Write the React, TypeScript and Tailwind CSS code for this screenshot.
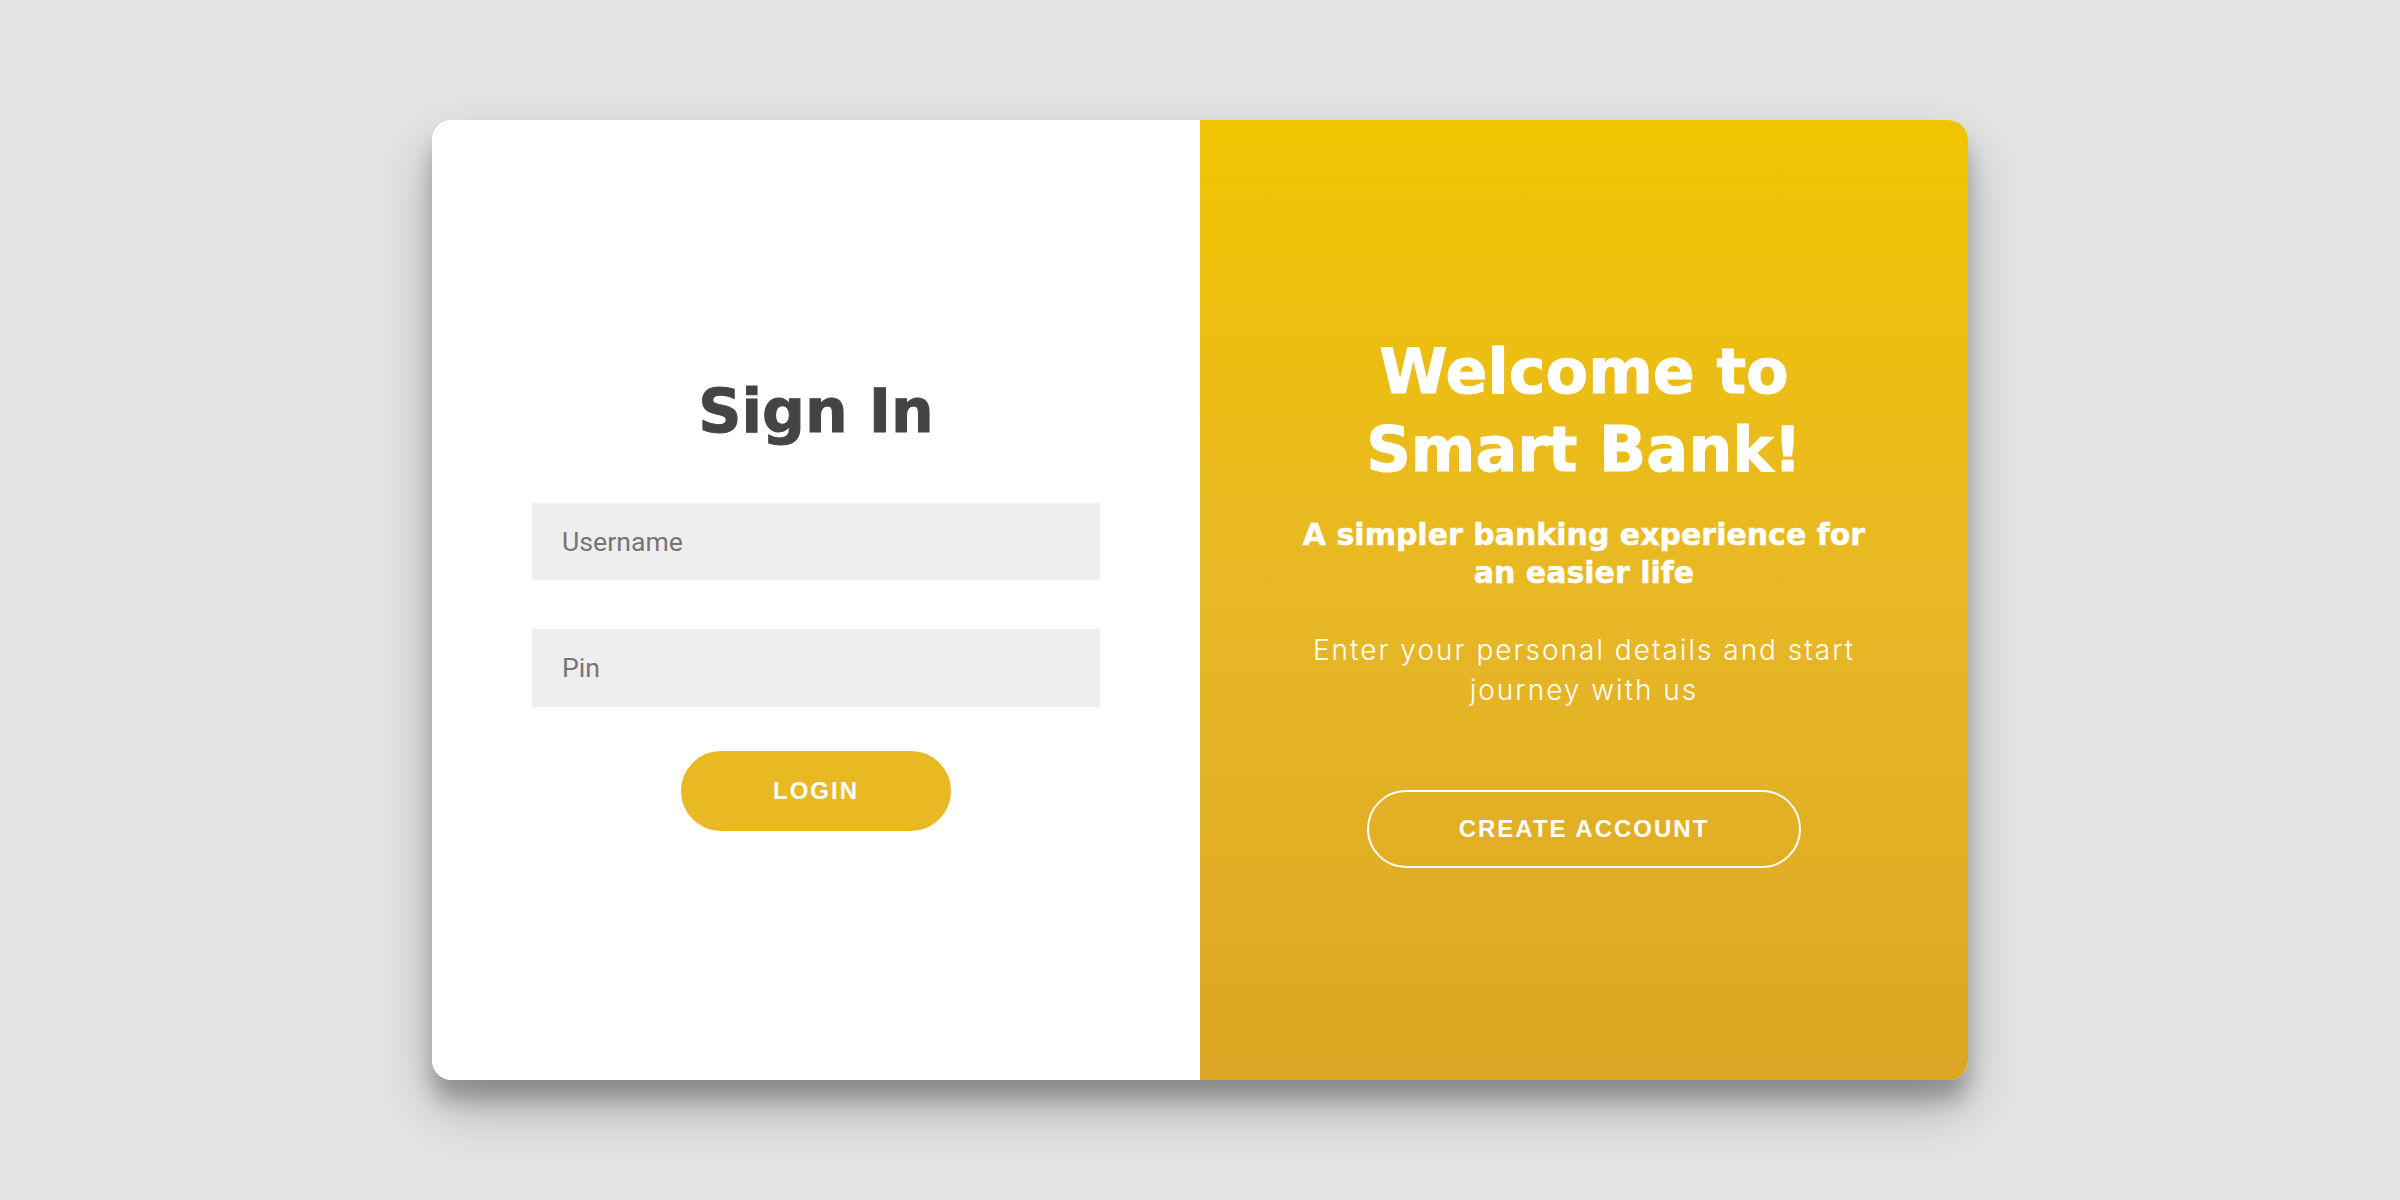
import React from "react";

export default function App() {
  return (
    <div className="w-[2400px] h-[1200px] bg-[#e4e4e4] flex items-center justify-center">
      <div className="w-[1536px] h-[960px] rounded-[20px] overflow-hidden flex bg-white shadow-[0_28px_56px_rgba(0,0,0,0.25),0_20px_20px_rgba(0,0,0,0.22)]">
        {/* Left: sign in */}
        <div className="w-[768px] h-full bg-white flex flex-col items-center justify-center px-[100px] pt-[6px]">
          <h1 className="text-[60px] leading-[72px] font-bold text-[#444444] m-0 [-webkit-text-stroke:1px_#444444] [font-family:'DejaVu_Sans',sans-serif]">
            Sign In
          </h1>
          <input
            type="text"
            placeholder="Username"
            className="mt-[56px] w-full h-[77px] bg-[#eeeeee] px-[30px] text-[26.67px] text-[#444] placeholder:text-[#757575] outline-none border-0 [font-family:Roboto,sans-serif]"
          />
          <input
            type="password"
            placeholder="Pin"
            className="mt-[49px] w-full h-[78px] bg-[#eeeeee] px-[30px] text-[26.67px] text-[#444] placeholder:text-[#757575] outline-none border-0 [font-family:Roboto,sans-serif]"
          />
          <button className="mt-[44px] h-[80px] px-[90px] rounded-[40px] bg-[#e8b923] border-2 border-[#e8b923] text-white text-[24px] font-bold tracking-[2px] uppercase [font-family:'Liberation_Sans',Arial,sans-serif]">
            Login
          </button>
        </div>
        {/* Right: overlay */}
        <div className="w-[768px] h-full flex flex-col items-center justify-center px-[80px] text-center text-white bg-[linear-gradient(to_bottom,#f0c400_0%,#e8b826_50%,#dba623_100%)]">
          <h1 className="text-[62px] leading-[78px] font-bold m-0 [-webkit-text-stroke:1px_#ffffff] [font-family:'DejaVu_Sans',sans-serif]">
            Welcome to
            <br />
            Smart Bank!
          </h1>
          <h3 className="mt-[27px] text-[30px] leading-[38px] font-bold [-webkit-text-stroke:0.5px_#ffffff] [font-family:'DejaVu_Sans',sans-serif]">
            A simpler banking experience for
            <br />
            an easier life
          </h3>
          <p className="mt-[38px] text-[28px] leading-[40px] font-light tracking-[2px] [font-family:Inter,sans-serif]">
            Enter your personal details and start
            <br />
            journey with us
          </p>
          <button className="mt-[80px] h-[78px] px-[90px] rounded-[40px] bg-transparent border-2 border-white text-white text-[24px] font-bold tracking-[2px] uppercase [font-family:'Liberation_Sans',Arial,sans-serif]">
            Create Account
          </button>
        </div>
      </div>
    </div>
  );
}
